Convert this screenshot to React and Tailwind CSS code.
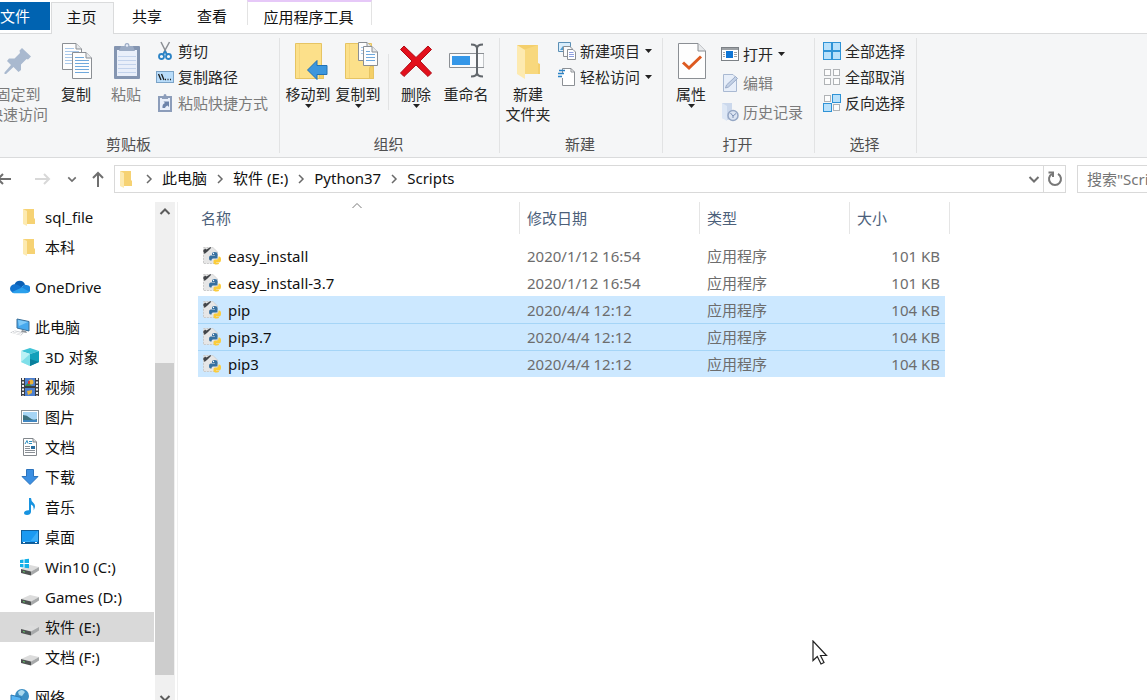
import React, { useState } from 'react';

/* ---------- ribbon icons, large ---------- */

const PinIcon = () => (
  <svg width="36" height="38" viewBox="-1 0 36 38">
    <path d="M21 6 L30 14.500 L27 17.500 L25.500 17 L20 22.500 L20 28 L17.500 30 L12.500 25 L5 32 L3.500 32 L3.500 30.500 L10 23 L6 19 L8 16.500 L13.500 16.500 L19 11 L18.500 8.500 Z" fill="#a9b9cf" />
  </svg>
);

const Sheet = ({ x, y, w, h, line = '#6fa8dc' }) => (
  <g transform={`translate(${x} ${y})`}>
    <path d={`M.5 .5 H${w - 6} L${w - 0.5} 6 V${h - 0.5} H.5 Z`} fill="#fdfdfd" stroke="#8b8f94" />
    <path d={`M${w - 6} .5 V6 H${w - 0.5}`} fill="#e8eaec" stroke="#8b8f94" />
    {Array.from({ length: Math.floor((h - 8) / 3) }, (_, i) => (
      <path key={i} d={`M3 ${5.5 + i * 3} H${i === 0 ? w - 8 : w - 3}`} stroke={line} />
    ))}
  </g>
);

const CopyIcon = () => (
  <svg width="32" height="38" viewBox="-1 0 32 38">
    <Sheet x={1} y={1} w={20} h={27} line="#a9c8ea" />
    <Sheet x={11} y={10} w={20} h={27} />
  </svg>
);

const PasteIcon = () => (
  <svg width="28" height="38" viewBox="-1 0 28 38">
    <rect x="1" y="4" width="26" height="33" rx="1" fill="#8495b1" />
    <rect x="4" y="8" width="20" height="26" fill="#e9effa" />
    <path d="M5 14.500H23M5 18.500H23M5 22.500H23M5 26.500H23M5 30.500H23" stroke="#c3d3ec" />
    <path d="M8 4h3.500a2.500 3 0 0 1 5 0H20l2 5H6z" fill="#9babc4" />
    <circle cx="14" cy="3.500" r="1.200" fill="#e9effa" />
  </svg>
);

const Folder = () => (
  <g>
    <path d="M.5 1.500H26.500V24H28.500V36.500H.5Z" fill="#fce08a" stroke="#e6c463" />
    <path d="M4.500 2V36" stroke="#f5d67c" />
    <path d="M24.500 36.500V27q0-3 2-3t2 3V36.500z" fill="#f4cf68" stroke="#e6c463" />
  </g>
);

const MoveToIcon = () => (
  <svg width="42" height="38" viewBox="-8 0 42 38">
    <Folder />
    <path d="M12.500 28 L22 18.500 V23.500 H32 V32.500 H22 V37.500 Z" fill="#3c96dd" stroke="#2272b4" />
  </svg>
);

const CopyToIcon = () => (
  <svg width="42" height="38" viewBox="-8 0 42 38">
    <Folder />
    <Sheet x={13} y={0} w={15} h={19} line="#a9c8ea" />
    <Sheet x={18} y={4} w={15} h={20} />
  </svg>
);

const DeleteIcon = () => (
  <svg width="34" height="38" viewBox="0 0 34 38">
    <path d="M5 4 L17 15.500 L29 4 L32.500 7.500 L21 19 L32.500 31 L29 34.500 L17 23 L5 34.500 L1.500 31 L13 19 L1.500 7.500 Z" fill="#e3101c" stroke="#b00c16" />
  </svg>
);

const RenameIcon = () => (
  <svg width="36" height="38" viewBox="-1 0 36 38">
    <path d="M.5 11.500H35V25.500H.5Z" fill="#fafbfc" stroke="#8b8f94" />
    <rect x="3" y="14" width="18" height="9" fill="#3597e8" />
    <path d="M28 5V32M22 2.500q6 0 6 4q0-4 6-4M22 34.500q6 0 6-4q0 4 6 4" fill="none" stroke="#62676c" strokeWidth="2" />
  </svg>
);

const NewFolderIcon = () => (
  <svg width="26" height="38" viewBox="0 0 26 38">
    <path d="M2 3H23V21L25 22V32H9Z" fill="#f4cf6c" />
    <path d="M8 8L23 3V32H9Z" fill="#f8d87d" />
    <path d="M2 3L10 8V37L2 32Z" fill="#fdeab0" />
  </svg>
);

const PropertiesIcon = () => (
  <svg width="30" height="38" viewBox="-1 0 30 38">
    <path d="M1.500 1.500H21L28.500 9V36.500H1.500Z" fill="#fefefe" stroke="#8b8f94" />
    <path d="M21 1.500V9H28.500" fill="#e8eaec" stroke="#8b8f94" />
    <path d="M6 20.500L12 26L24 14.500" fill="none" stroke="#dd5a20" strokeWidth="3" />
  </svg>
);

/* ---------- ribbon icons, small ---------- */

const CutIcon = () => (
  <svg width="18" height="20" viewBox="0 0 18 20">
    <path d="M5 1L10.500 12M13.500 1L7.500 12" stroke="#8b8f94" strokeWidth="1.500" />
    <circle cx="5.500" cy="15.500" r="2.500" fill="none" stroke="#2b83c6" strokeWidth="1.800" />
    <circle cx="12.500" cy="15.500" r="2.500" fill="none" stroke="#2b83c6" strokeWidth="1.800" />
    <path d="M7 13.500L9 10.500L11 13.500" fill="none" stroke="#2b83c6" strokeWidth="1.800" />
  </svg>
);

const CopyPathIcon = () => (
  <svg width="18" height="12" viewBox="0 0 18 12">
    <rect x=".5" y=".5" width="17" height="11" fill="#b8dcfa" stroke="#7ba3c7" />
    <path d="M2.500 3L5 9M5.500 3L8 9" stroke="#1c1c1c" strokeWidth="1.300" />
    <path d="M9 8.500h1M11.500 8.500h1M14 8.500h1" stroke="#1c1c1c" strokeWidth="1.300" />
  </svg>
);

const PasteShortcutIcon = () => (
  <svg width="18" height="20" viewBox="0 0 18 20">
    <rect x="2" y="3" width="14" height="16" fill="#8c9dba" />
    <rect x="4" y="5" width="10" height="12" fill="#e9effa" />
    <path d="M6 3h1.500a1.500 2 0 0 1 3 0H12v3H6z" fill="#8c9dba" />
    <path d="M6.500 15q-.5-4 2.500-5L7.500 8.500H13V14L11.500 12.500q-2 .5-2.500 2.500z" fill="#6c83aa" />
  </svg>
);

const NewItemIcon = () => (
  <svg width="18" height="20" viewBox="0 0 18 20">
    <path d="M.5 1.500H12.500V10.500H.5Z" fill="#d9edfb" stroke="#5b8fb5" />
    <path d="M2 9L5 5L8 9Z" fill="#4f9cd0" />
    <path d="M5.500 5.500H12L14.500 8V15.500H5.500Z" fill="#fafafa" stroke="#8b8f94" />
    <path d="M9.500 8.500H15L17.500 11V18.500H9.500Z" fill="#fff" stroke="#8b8f94" />
    <path d="M11 11.500H15.500M11 13.500H16M11 15.500H16" stroke="#8f9fe0" />
  </svg>
);

const EasyAccessIcon = () => (
  <svg width="18" height="20" viewBox="0 0 18 20">
    <path d="M4.500 7V1.500H13L16.500 5V18.500H4.500V11" fill="#fff" stroke="#8b8f94" />
    <path d="M13 1.500V5H16.500" fill="none" stroke="#8b8f94" />
    <path d="M1 3.500H7M0 6.500H6M0 9.500H4" stroke="#2b83c6" strokeWidth="1.500" />
  </svg>
);

const OpenIcon = () => (
  <svg width="18" height="14" viewBox="0 0 18 14">
    <rect x=".5" y=".5" width="17" height="13" fill="#fff" stroke="#7c8186" />
    <path d="M1 2H17" stroke="#9da1a5" strokeWidth="2" />
    <rect x="5" y="4" width="7" height="7" fill="#0f75d4" />
    <path d="M2 5.500H4M2 7.500H4M2 9.500H4M13 5.500H16M13 7.500H16M13 9.500H16" stroke="#9da1a5" />
  </svg>
);

const EditIcon = () => (
  <svg width="18" height="20" viewBox="0 0 18 20">
    <path d="M2.500 1.500H12L15.500 5V18.500H2.500Z" fill="#e7eef9" stroke="#a9b9d2" />
    <path d="M4.500 15L5.500 12L14.500 3.500L16.500 5.500L7.500 14Z" fill="#c3d1e6" stroke="#9aabc8" />
  </svg>
);

const HistoryIcon = () => (
  <svg width="18" height="20" viewBox="0 0 18 20">
    <path d="M1 1H11V17L6 18L1 16Z" fill="#cbd8ec" />
    <path d="M1 1L6 4V19L1 16Z" fill="#dde7f5" />
    <circle cx="12" cy="13.500" r="5" fill="#dbe4f2" stroke="#94a6c4" strokeWidth="1.500" />
    <path d="M9.500 11L12 14L15 11.500M12 14V16" fill="none" stroke="#7b90b4" />
  </svg>
);

const blue = { fill: '#b9e1fb', stroke: '#2f93d6' };
const grey = { fill: '#fdfdfd', stroke: '#b0b3b6' };

const SelectAllIcon = () => (
  <svg width="18" height="18" viewBox="0 0 18 18">
    <rect x=".5" y=".5" width="17" height="17" {...blue} />
    <path d="M9 0V18M0 9H18" stroke="#2f93d6" strokeWidth="2" />
  </svg>
);

const SelectNoneIcon = () => (
  <svg width="18" height="18" viewBox="0 0 18 18">
    <rect x="1.500" y="1.500" width="6" height="6" {...grey} />
    <rect x="10.500" y="1.500" width="6" height="6" {...grey} />
    <rect x="1.500" y="10.500" width="6" height="6" {...grey} />
    <rect x="10.500" y="10.500" width="6" height="6" {...grey} />
  </svg>
);

const InvertIcon = () => (
  <svg width="18" height="18" viewBox="0 0 18 18">
    <rect x="1.500" y="1.500" width="6" height="6" {...grey} />
    <rect x="9.500" y=".5" width="8" height="8" {...blue} />
    <rect x=".5" y="9.500" width="8" height="8" {...blue} />
    <rect x="10.500" y="10.500" width="6" height="6" {...grey} />
  </svg>
);

/* ---------- navigation pane icons ---------- */

const FolderSmall = () => (
  <svg width="14" height="18" viewBox="0 0 14 18" className="shrink-0">
    <path d="M0 1H11V10L12 11V16H3Z" fill="#f6d273" />
    <path d="M0 1L4 3V18L0 16Z" fill="#fdeab0" />
  </svg>
);

const OneDriveIcon = () => (
  <svg width="20" height="14" viewBox="0 0 20 14">
    <path d="M4.500 4.500A5.500 5.500 0 0 1 15 4.500L9 9Z" fill="#0a5fb4" />
    <path d="M4 13A4.200 4.200 0 0 1 5 4.200Q8 4 14 9L6 13Z" fill="#1173cf" />
    <path d="M12.500 6Q14 4 16.500 5A4 4 0 0 1 16.500 13H10Z" fill="#1b86dd" />
    <path d="M2 12L12 7.500L19 11.500Q18 13.200 16 13.200H4Q3 13.200 2 12Z" fill="#2ba0ec" />
  </svg>
);

const ComputerIcon = () => (
  <svg width="20" height="18" viewBox="0 0 20 18">
    <path d="M7 1L19 3.500V13L7 10Z" fill="#47a9ee" stroke="#3b6f98" />
    <path d="M8 2L18 4L9 8Z" fill="#80caf8" />
    <path d="M12 12L16 13L17 15L11 14Z" fill="#8f9499" />
    <path d="M0 14.500L5 12.500L14 14.500L11 17.500Z" fill="#c9ccd0" />
    <path d="M2 14.500L11 16.500M4 13.500L12 15.500" stroke="#fff" />
  </svg>
);

const CubeIcon = () => (
  <svg width="20" height="20" viewBox="0 0 20 20">
    <path d="M1 4L10 1L19 4L10 7Z" fill="#3fc3d6" />
    <path d="M1 4L10 7V19L1 15Z" fill="#b9f1f5" />
    <path d="M10 7L19 4V15L10 19Z" fill="#12a0ba" />
    <path d="M1 15L10 7V19Z" fill="#7fdfe9" />
    <path d="M10 12L19 15L10 19Z" fill="#0b7f9c" />
  </svg>
);

const VideoIcon = () => (
  <svg width="20" height="20" viewBox="0 0 20 20">
    <rect x="1" y="1" width="18" height="18" fill="#3a3d42" />
    <rect x="5" y="1" width="10" height="8" fill="#4c7fd0" />
    <rect x="5" y="11" width="10" height="8" fill="#4c7fd0" />
    <circle cx="11" cy="5" r="2.500" fill="#e8b23a" />
    <path d="M5 9L8 6L12 9Z" fill="#3f8f3f" />
    <path d="M8 4H10V7H8Z" fill="#d9402e" />
    <path d="M7 14L12 13V16L8 18Z" fill="#e8b23a" />
    <path d="M3 1V19M17 1V19" stroke="#f1f1f1" strokeWidth="2" strokeDasharray="2 1.500" />
  </svg>
);

const PictureIcon = () => (
  <svg width="20" height="16" viewBox="0 0 20 16">
    <rect x="1.500" y="1.500" width="17" height="13" fill="#fff" stroke="#8e9398" />
    <rect x="3" y="3" width="14" height="10" fill="#a6d5f5" />
    <path d="M3 6Q7 6 10 9T17 10V13H3Z" fill="#3c7180" />
    <path d="M3 11H17V13H3Z" fill="#3f86c0" />
  </svg>
);

const DocumentIcon = () => (
  <svg width="20" height="20" viewBox="0 0 20 20">
    <path d="M3.500 1.500H13L16.500 5V18.500H3.500Z" fill="#fff" stroke="#82878c" />
    <path d="M13 1.500V5H16.500" fill="#ddd" stroke="#82878c" />
    <path d="M5 7L7 3.500L8 6.500M9 4.500H12M9 6.500H12" stroke="#2b8fc0" fill="none" />
    <path d="M5 9.500H10M5 11.500H10M5 13.500H15M5 15.500H15" stroke="#8a9096" />
    <rect x="11" y="9" width="4" height="3" fill="#2b6fa0" />
  </svg>
);

const DownloadIcon = () => (
  <svg width="20" height="20" viewBox="0 0 20 20">
    <path d="M6.500 2.500H13.500V9.500H18L10 17.500L2 9.500H6.500Z" fill="#3b8fe2" stroke="#2b73bd" />
  </svg>
);

const MusicIcon = () => (
  <svg width="20" height="20" viewBox="0 0 20 20">
    <path d="M9 1H11Q11 4 13.500 6Q16.500 8.500 13.500 13.500Q14.500 9 11 7.500V15Q10.500 18 7 18Q4 18 4 15.800Q4.500 13 9 13.200Z" fill="#1793e0" />
  </svg>
);

const DesktopIcon = () => (
  <svg width="20" height="16" viewBox="0 0 20 16">
    <rect x="1.500" y="1.500" width="17" height="13" fill="#1b9af2" stroke="#12609c" />
    <path d="M9 14L18 2V12H2V12Z" fill="#3caef8" />
    <path d="M2 13.500H18" stroke="#0b5a99" />
    <path d="M3 13.500H5M15 13.500H17" stroke="#fff" />
  </svg>
);

const DriveShape = () => (
  <g>
    <path d="M1 12L10 8L19 10L11 14.500Z" fill="#dcdcdc" />
    <path d="M1 12L11 14.500V18.500L1 16Z" fill="#4f5252" />
    <path d="M11 14.500L19 10V13.500L11 18.500Z" fill="#a7a9aa" />
    <path d="M3 14.500L5 15" stroke="#63c46a" />
  </g>
);

const DriveIcon = () => (
  <svg width="20" height="20" viewBox="0 0 20 20"><DriveShape /></svg>
);

const SystemDriveIcon = () => (
  <svg width="20" height="20" viewBox="0 0 20 20">
    <DriveShape />
    <path d="M0 3L3.500 2.500V6H0ZM4.500 2.300L9 1.700V6H4.500ZM0 7H3.500V10.500L0 10ZM4.500 7H9V11.300L4.500 10.700Z" fill="#12b0e8" />
  </svg>
);

const NetworkIcon = () => (
  <svg width="20" height="20" viewBox="0 0 20 20">
    <circle cx="12" cy="9" r="7" fill="#3c8fc4" />
    <path d="M8 5Q12 1 15 5L12 9L9 8Z" fill="#a9d9ee" />
    <path d="M1 8L11 10.500V18L1 16Z" fill="#58b5f4" stroke="#2a7ab5" />
  </svg>
);

const PythonExeIcon = () => (
  <svg width="20" height="20" viewBox="0 0 20 20" className="shrink-0">
    <path d="M1.500 1.500H11L15.500 6V17.500H1.500Z" fill="#e6e6e6" stroke="#cacaca" strokeDasharray="2 1" />
    <path d="M1 5L3 2.500L4.500 3.500L8.500 1L9 2L5.500 5.500L2.500 8L2 6.500Z" fill="#43464a" />
    <path d="M12.500 6q3 0 3 2v3q0 1.500-1.500 1.500h-3Q9.500 12.500 9.500 14.500H8.500q-1.500 0-1.500-2.500T8.500 9.500h4.500V9H10V7.500Q10 6 12.500 6Z" fill="#3670a0" />
    <path d="M14.500 18.500q-3 0-3-2v-1.500q0-1.500 1.500-1.500h2q1.500 0 1.500-3h.5q2 0 2 3t-2 3h-3v.5h3v.5q0 1-2.500 1Z" fill="#fbcc3a" />
    <circle cx="11.500" cy="7.500" r=".7" fill="#fff" />
  </svg>
);

const Chevron = ({ d, size = 12, color = '#5c5c5c', width = 2 }) => (
  <svg width={size} height={size} viewBox="0 0 12 12">
    <path d={d} fill="none" stroke={color} strokeWidth={width} />
  </svg>
);

const DOWN = 'M1.500 4L6 8.500L10.500 4';
const UP = 'M1.500 8L6 3.500L10.500 8';
const RIGHT = 'M4 2L8 6L4 10';

const Caret = () => (
  <svg width="7" height="4" viewBox="0 0 7 4"><path d="M0 0H7L3.500 4Z" fill="#222" /></svg>
);

/* ---------- ribbon building blocks ---------- */

function BigButton({ icon, lines, caret, disabled, className }) {
  return (
    <button disabled={disabled} className={`flex shrink-0 flex-col items-center pt-1 leading-5 ${disabled ? 'text-[#7a7a7a]' : 'text-[#262626]'} ${className}`}>
      {icon}
      <span className="mt-1 flex flex-col items-center whitespace-nowrap">
        {lines.map((line) => <span key={line}>{line}</span>)}
      </span>
      {caret && <Caret />}
    </button>
  );
}

function SmallButton({ icon, label, caret, disabled }) {
  return (
    <button disabled={disabled} className={`flex h-[26px] items-center whitespace-nowrap ${disabled ? 'text-[#7a7a7a]' : 'text-[#262626]'}`}>
      <span className="mr-1 flex w-[18px] justify-center">{icon}</span>
      {label}
      {caret && <span className="ml-[5px]"><Caret /></span>}
    </button>
  );
}

function Group({ label, className, children }) {
  return (
    <section aria-label={label} className={`flex shrink-0 flex-col border-r border-[#e2e3e4] ${className}`}>
      <div className="flex flex-1 items-start">{children}</div>
      <div className="pr-0.5 pb-px text-center leading-4 text-[#4f4f4f]">{label}</div>
    </section>
  );
}

const navItems = [
  { label: 'sql_file', icon: FolderSmall, nested: true },
  { label: '本科', icon: FolderSmall, nested: true },
  { label: 'OneDrive', icon: OneDriveIcon, gap: true },
  { label: '此电脑', icon: ComputerIcon, gap: true },
  { label: '3D 对象', icon: CubeIcon, nested: true },
  { label: '视频', icon: VideoIcon, nested: true },
  { label: '图片', icon: PictureIcon, nested: true },
  { label: '文档', icon: DocumentIcon, nested: true },
  { label: '下载', icon: DownloadIcon, nested: true },
  { label: '音乐', icon: MusicIcon, nested: true },
  { label: '桌面', icon: DesktopIcon, nested: true },
  { label: 'Win10 (C:)', icon: SystemDriveIcon, nested: true },
  { label: 'Games (D:)', icon: DriveIcon, nested: true },
  { label: '软件 (E:)', icon: DriveIcon, nested: true },
  { label: '文档 (F:)', icon: DriveIcon, nested: true },
  { label: '网络', icon: NetworkIcon, gap: true },
];

const files = [
  { name: 'easy_install', date: '2020/1/12 16:54', size: '101 KB' },
  { name: 'easy_install-3.7', date: '2020/1/12 16:54', size: '101 KB' },
  { name: 'pip', date: '2020/4/4 12:12', size: '104 KB' },
  { name: 'pip3.7', date: '2020/4/4 12:12', size: '104 KB' },
  { name: 'pip3', date: '2020/4/4 12:12', size: '104 KB' },
];

const path = ['此电脑', '软件 (E:)', 'Python37', 'Scripts'];

export default function App() {
  const [current, setCurrent] = useState('软件 (E:)');
  const [selected, setSelected] = useState(['pip', 'pip3.7', 'pip3']);

  return (
    <div className="relative flex h-screen flex-col overflow-hidden bg-white font-['Noto_Sans','Noto_Sans_CJK_SC',sans-serif] text-[15px] text-[#111]">

      {/* Tabs */}
      <nav className="flex h-[34px] shrink-0 border-b border-[#dadbdc] whitespace-nowrap">
        <button className="mt-0.5 h-7 w-[50px] bg-[#0063b1] pr-5 text-white">文件</button>
        <button className="mt-0.5 -mb-px ml-px w-[63px] border border-b-0 border-[#dadbdc] bg-[#f5f6f7] pr-0.5 pb-0.5">主页</button>
        <button className="w-[66px]">共享</button>
        <button className="w-[66px] pr-0.5">查看</button>
        <button className="mb-2 ml-px w-[125px] border-x border-t-2 border-x-[#e3e3e3] border-t-[#e6c8f8] pt-1 pr-0.5">应用程序工具</button>
      </nav>

      {/* Ribbon */}
      <div className="flex h-[124px] shrink-0 border-b border-[#dadbdc] bg-[#f5f6f7] py-1">
        <Group label="剪贴板" className="-ml-5 w-[300px]">
          <BigButton icon={<PinIcon />} lines={['固定到', '快速访问']} disabled className="ml-1.5 w-16" />
          <BigButton icon={<CopyIcon />} lines={['复制']} className="w-[52px]" />
          <BigButton icon={<PasteIcon />} lines={['粘贴']} disabled className="w-12" />
          <div className="ml-1.5 flex flex-col">
            <SmallButton icon={<CutIcon />} label="剪切" />
            <SmallButton icon={<CopyPathIcon />} label="复制路径" />
            <SmallButton icon={<PasteShortcutIcon />} label="粘贴快捷方式" disabled />
          </div>
        </Group>

        <Group label="组织" className="w-[220px]">
          <BigButton icon={<MoveToIcon />} lines={['移动到']} caret className="ml-[3px] w-[50px]" />
          <BigButton icon={<CopyToIcon />} lines={['复制到']} caret className="w-[50px]" />
          <div className="mt-4 ml-[5px] h-14 w-px bg-[#e2e3e4]" />
          <BigButton icon={<DeleteIcon />} lines={['删除']} caret className="ml-[3px] w-12" />
          <BigButton icon={<RenameIcon />} lines={['重命名']} className="ml-px w-[50px]" />
        </Group>

        <Group label="新建" className="w-[163px]">
          <BigButton icon={<NewFolderIcon />} lines={['新建', '文件夹']} className="w-14" />
          <div className="ml-0.5 flex flex-col">
            <SmallButton icon={<NewItemIcon />} label="新建项目" caret />
            <SmallButton icon={<EasyAccessIcon />} label="轻松访问" caret />
          </div>
        </Group>

        <Group label="打开" className="w-[152px]">
          <BigButton icon={<PropertiesIcon />} lines={['属性']} caret className="w-14" />
          <div className="ml-0.5 flex flex-col gap-[3px] pt-[3px]">
            <SmallButton icon={<OpenIcon />} label="打开" caret />
            <SmallButton icon={<EditIcon />} label="编辑" disabled />
            <SmallButton icon={<HistoryIcon />} label="历史记录" disabled />
          </div>
        </Group>

        <Group label="选择" className="w-[102px]">
          <div className="ml-2 flex flex-col">
            <SmallButton icon={<SelectAllIcon />} label="全部选择" />
            <SmallButton icon={<SelectNoneIcon />} label="全部取消" />
            <SmallButton icon={<InvertIcon />} label="反向选择" />
          </div>
        </Group>
      </div>

      {/* Address bar */}
      <div className="flex h-[42px] shrink-0 items-center">
        <button aria-label="后退" className="-ml-1">
          <svg width="16" height="16" viewBox="0 0 16 16"><path d="M15 8H2M7 3L2 8L7 13" fill="none" stroke="#6f6f6f" strokeWidth="2" /></svg>
        </button>
        <button aria-label="前进" className="ml-[22px]">
          <svg width="17" height="16" viewBox="0 0 17 16"><path d="M1 8H15M10 3L15 8L10 13" fill="none" stroke="#d8d8d8" strokeWidth="2" /></svg>
        </button>
        <button aria-label="最近位置" className="ml-4">
          <Chevron d={DOWN} size={10} color="#6f6f6f" />
        </button>
        <button aria-label="向上" className="ml-3.5">
          <svg width="14" height="18" viewBox="0 0 14 18"><path d="M7 17V3M2 8L7 3L12 8" fill="none" stroke="#6f6f6f" strokeWidth="2" /></svg>
        </button>

        <div className="ml-[9px] flex h-7 min-w-0 flex-1 items-center border border-[#d9d9d9] pl-[5px]">
          <FolderSmall />
          <div className="flex items-center pb-0.5 pl-0.5">
            {path.map((part) => (
              <React.Fragment key={part}>
                <span className="flex w-[26px] shrink-0 justify-center pt-0.5"><Chevron d={RIGHT} color="#6a6a6a" width={1.5} /></span>
                <button className="whitespace-nowrap">{part}</button>
              </React.Fragment>
            ))}
          </div>
          <button aria-label="历史地址" className="ml-auto px-[3px]"><Chevron d={DOWN} color="#707070" /></button>
          <button aria-label="刷新" className="flex h-full w-[22px] items-center justify-center border-l border-[#d9d9d9]">
            <svg width="16" height="16" viewBox="0 0 16 16">
              <path d="M5 2.800A6 6 0 1 0 11 2.800" fill="none" stroke="#787878" strokeWidth="2" />
              <path d="M1.500 1.500H6V6" fill="none" stroke="#787878" strokeWidth="2" />
            </svg>
          </button>
        </div>
        <input
          aria-label="搜索"
          placeholder={'搜索"Scripts"'}
          className="ml-[11px] h-7 w-[70px] border border-r-0 border-[#d9d9d9] pl-[9px] outline-none placeholder:text-[#757575]"
        />
      </div>

      <div className="flex min-h-0 flex-1 pt-0.5">
        {/* Navigation pane */}
        <aside className="w-[154px] shrink-0 overflow-hidden">
          {navItems.map(({ label, icon: Icon, nested, gap }) => (
            <button
              key={label}
              onClick={() => setCurrent(label)}
              className={`flex h-[30px] w-full items-center whitespace-nowrap ${nested ? 'pl-5' : 'pl-2.5'} ${gap ? 'mt-2.5' : ''} ${current === label ? 'bg-[#d9d9d9]' : ''}`}
            >
              <span className="mr-[5px] flex w-5 justify-center"><Icon /></span>
              {label}
            </button>
          ))}
        </aside>
        <div className="-mb-2 ml-px flex w-5 shrink-0 flex-col bg-[#f0f0f0]">
          <button aria-label="向上滚动" className="flex h-5 shrink-0 items-center justify-center"><Chevron d={UP} /></button>
          <div className="grow-[141]" />
          <div className="mr-px grow-[311] bg-[#cdcdcd]" />
          <div className="grow-[13]" />
          <button aria-label="向下滚动" className="flex h-5 shrink-0 items-center justify-center"><Chevron d={DOWN} /></button>
        </div>
        <div className="ml-0.5 w-px shrink-0 bg-[#f0f0f0]" />

        {/* File list */}
        <main className="min-w-0 flex-1 pl-5">
          <table className="w-[752px] table-fixed border-collapse">
            <colgroup>
              <col className="w-[322px]" />
              <col className="w-[180px]" />
              <col className="w-[150px]" />
              <col className="w-[95px]" />
              <col className="w-[5px]" />
            </colgroup>
            <thead className="text-left text-[#4c607a]">
              <tr>
                <th className="relative h-10 p-0 pb-2 font-normal">
                  <div className="h-8 border-r border-[#e5e5e5] pl-[3px] leading-8">名称</div>
                  <span className="absolute -top-0.5 left-1/2 -ml-2"><Chevron d={UP} color="#7a7a7a" width={1} /></span>
                </th>
                <th className="h-10 p-0 pb-2 font-normal"><div className="h-8 border-r border-[#e5e5e5] pl-[7px] leading-8">修改日期</div></th>
                <th className="h-10 p-0 pb-2 font-normal"><div className="h-8 border-r border-[#e5e5e5] pl-[7px] leading-8">类型</div></th>
                <th colSpan={2} className="h-10 p-0 pb-2 font-normal"><div className="h-8 border-r border-[#e5e5e5] pl-[7px] leading-8">大小</div></th>
              </tr>
            </thead>
            <tbody>
              {files.map((file, i) => {
                const on = selected.includes(file.name);
                const line = on && i > 0 && selected.includes(files[i - 1].name);
                const cell = `h-[27px] p-0 leading-[26px] ${on ? 'bg-[#cce8ff]' : ''} ${line ? 'shadow-[inset_0_1px_#a5d5f7]' : ''}`;
                return (
                  <tr key={file.name} onClick={() => setSelected([file.name])}>
                    <td className={cell}>
                      <span className="flex items-center gap-1.5 pl-1"><PythonExeIcon />{file.name}</span>
                    </td>
                    <td className={`${cell} pl-[7px] text-[#6d6d6d]`}>{file.date}</td>
                    <td className={`${cell} pl-[7px] text-[#6d6d6d]`}>应用程序</td>
                    <td className={`${cell} pr-[5px] text-right text-[#6d6d6d]`}>{file.size}</td>
                    <td className="p-0" />
                  </tr>
                );
              })}
            </tbody>
          </table>
        </main>
      </div>

      {/* Mouse pointer */}
      <svg width="16" height="26" viewBox="0 0 16 26" className="pointer-events-none absolute top-[640px] left-[812px]">
        <path d="M1 1V20.500L5.300 16.500L9 24L12 22.500L8.500 15.500H14.500Z" fill="#fff" stroke="#222" strokeWidth="1.200" />
      </svg>
    </div>
  );
}
